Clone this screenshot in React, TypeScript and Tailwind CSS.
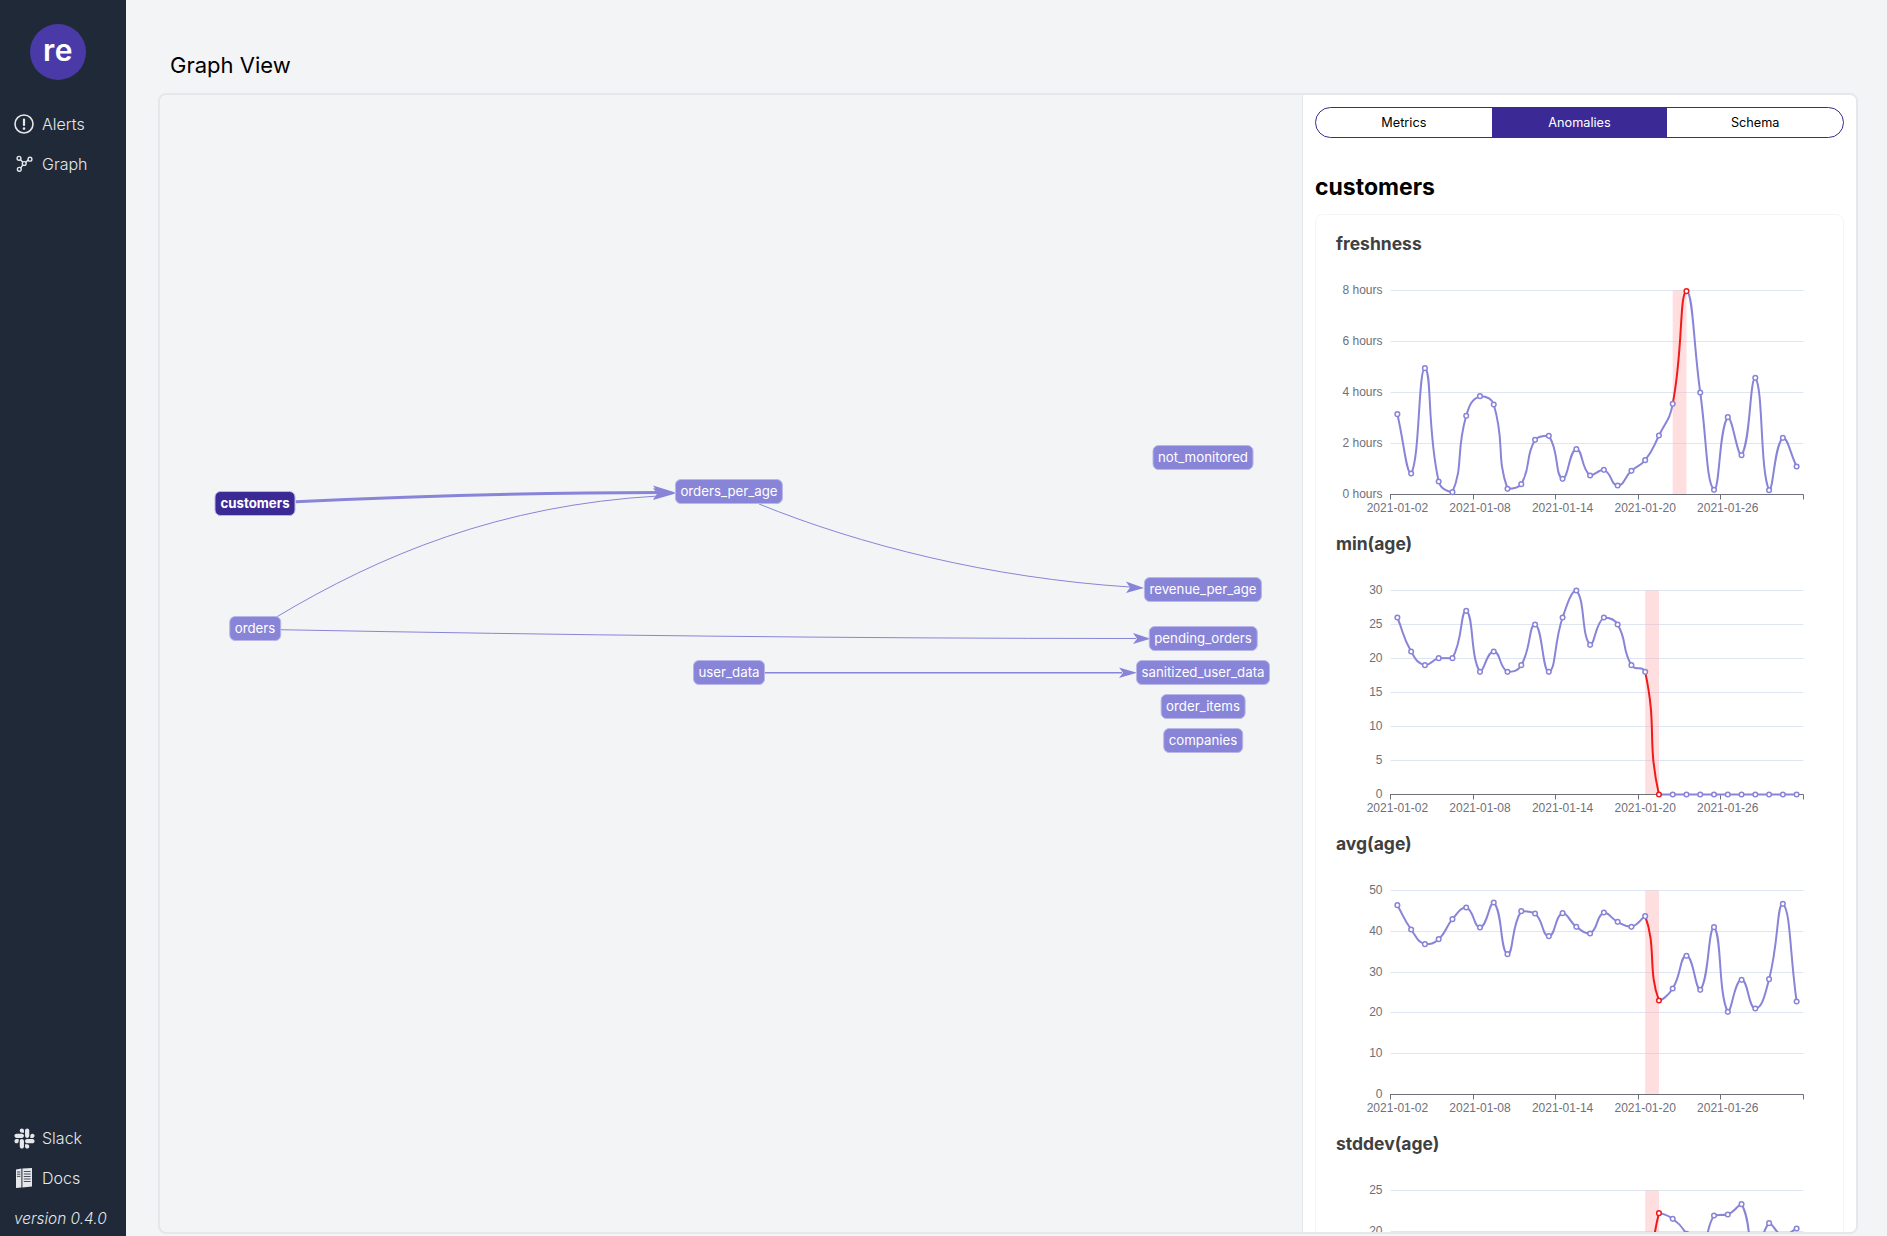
import { FaSlack } from 'react-icons/fa';

const dates = ['2021-01-02', '2021-01-08', '2021-01-14', '2021-01-20', '2021-01-26'];

type Chart = {
  title: string;
  top: number;
  ticks: string[];
  points: number[];
  anomaly: number;
};

// point y values are read off the reference, `top` is where the highest gridline sits
const charts: Chart[] = [
  {
    title: 'freshness',
    top: 615,
    ticks: ['8 hours', '6 hours', '4 hours', '2 hours', '0 hours'],
    anomaly: 20,
    points: [986, 1164, 848, 1188, 1220, 991, 932, 957, 1210, 1196, 1063, 1051, 1180, 1091, 1170, 1153, 1200, 1156, 1124, 1050, 955, 617, 921, 1213, 995, 1109, 877, 1214, 1057, 1143],
  },
  {
    title: 'min(age)',
    top: 210,
    ticks: ['30', '25', '20', '15', '10', '5', '0'],
    anomaly: 18,
    points: [291, 393, 434, 413, 413, 271, 454, 393, 454, 434, 312, 454, 291, 210, 373, 291, 312, 434, 454, 822, 822, 822, 822, 822, 822, 822, 822, 822, 822, 822],
  },
  {
    title: 'avg(age)',
    top: 181,
    ticks: ['50', '40', '30', '20', '10', '0'],
    anomaly: 18,
    points: [225, 298, 342, 327, 267, 232, 292, 217, 372, 243, 250, 318, 249, 290, 310, 247, 275, 290, 258, 511, 475, 377, 479, 291, 545, 449, 535, 447, 221, 514],
  },
  {
    title: 'stddev(age)',
    top: 1080,
    ticks: ['25', '20', '15', '10', '5', '0'],
    anomaly: 18,
    points: [1400, 1380, 1420, 1390, 1410, 1370, 1400, 1430, 1390, 1410, 1380, 1420, 1400, 1370, 1410, 1390, 1420, 1400, 1480, 1148, 1165, 1210, 1280, 1155, 1152, 1121, 1290, 1178, 1215, 1194],
  },
];

const plotLeft = 54.5;
const plotRight = 467.5;
const plotTop = 34.5;
const plotBottom = 238.5;
const band = (plotRight - plotLeft) / 30;

// same smoothing as a smooth echarts line, clamped so the curve stays between its points
function segments(pts: [number, number][], smooth = 0.5) {
  const out: string[] = [];
  const cps: [number, number][] = [];
  pts.forEach((p, i) => {
    const prev = pts[Math.max(i - 1, 0)];
    const next = pts[Math.min(i + 1, pts.length - 1)];
    const dx = next[0] - prev[0];
    const dy = next[1] - prev[1];
    const a = Math.hypot(p[0] - prev[0], p[1] - prev[1]);
    const b = Math.hypot(next[0] - p[0], next[1] - p[1]);
    const r = a + b === 0 ? 0 : b / (a + b);
    const clamp = (v: number, u: number, w: number) => Math.min(Math.max(v, Math.min(u, w)), Math.max(u, w));
    cps.push([clamp(p[0] - dx * smooth * (1 - r), prev[0], p[0]), clamp(p[1] - dy * smooth * (1 - r), prev[1], p[1])]);
    cps.push([clamp(p[0] + dx * smooth * r, p[0], next[0]), clamp(p[1] + dy * smooth * r, p[1], next[1])]);
  });
  for (let i = 0; i < pts.length - 1; i++) {
    const c1 = cps[i * 2 + 1];
    const c2 = cps[(i + 1) * 2];
    out.push(`M${pts[i][0]} ${pts[i][1]}C${c1[0]} ${c1[1]} ${c2[0]} ${c2[1]} ${pts[i + 1][0]} ${pts[i + 1][1]}`);
  }
  return out;
}

function MetricChart({ chart }: { chart: Chart }) {
  const pts = chart.points.map((y, i): [number, number] => [plotLeft + band * (i + 0.5), (y - chart.top) / 3 + plotTop]);
  const segs = segments(pts);
  const step = (plotBottom - plotTop) / (chart.ticks.length - 1);
  const a = chart.anomaly;

  return (
    <div className="h-[300px]">
      <h3 className="h-6 text-[17.5px] leading-6 font-bold text-[#404040]">{chart.title}</h3>
      <svg width="487" height="276" className="block font-['Liberation_Sans',sans-serif] text-[12px]">
        {chart.ticks.map((t, i) => {
          const y = Math.round(plotTop + step * i - 0.5) + 0.5;
          return (
            <g key={t}>
              {i < chart.ticks.length - 1 && <line x1={plotLeft} x2={plotRight} y1={y} y2={y} stroke="#e0e6f1" />}
              <text x="46.5" y={y + 3} textAnchor="end" fill="#6e7079">{t}</text>
            </g>
          );
        })}
        <rect x={pts[a][0]} y={plotTop} width={band} height={plotBottom - plotTop} fill="rgba(255,173,177,0.4)" />
        <line x1={plotLeft - 0.5} x2={plotRight} y1={plotBottom} y2={plotBottom} stroke="#6e7079" />
        {[0, 1, 2, 3, 4, 5].map((i) => {
          const x = Math.round(plotLeft + band * 6 * i - 0.5) + 0.5;
          return <line key={i} x1={x} x2={x} y1={plotBottom} y2={plotBottom + 5} stroke="#6e7079" />;
        })}
        {dates.map((d, i) => (
          <text key={d} x={plotLeft + band * (6 * i + 0.5)} y="256" textAnchor="middle" fill="#6e7079">{d}</text>
        ))}
        {segs.map((d, i) => (
          <path key={i} d={d} fill="none" strokeWidth="2" stroke={i === a ? '#f01a1a' : '#8884d8'} />
        ))}
        {pts.map((p, i) => (
          <circle key={i} cx={p[0]} cy={p[1]} r="2.3" fill="#fff" strokeWidth="1.5" stroke={i === a + 1 ? '#f01a1a' : '#8884d8'} />
        ))}
      </svg>
    </div>
  );
}

const nodes = [
  { name: 'customers', cls: 'left-[95px] top-[396px] w-[81px] bg-[#3b2a96] text-center font-bold' },
  { name: 'orders', cls: 'left-[95px] top-[521px] bg-[#8884d8]' },
  { name: 'orders_per_age', cls: 'left-[569px] top-[384px] bg-[#8884d8]' },
  { name: 'user_data', cls: 'left-[569px] top-[565px] bg-[#8884d8]' },
  { name: 'not_monitored', cls: 'left-[1043px] top-[350px] bg-[#8884d8]' },
  { name: 'revenue_per_age', cls: 'left-[1043px] top-[482px] bg-[#8884d8]' },
  { name: 'pending_orders', cls: 'left-[1043px] top-[531px] bg-[#8884d8]' },
  { name: 'sanitized_user_data', cls: 'left-[1043px] top-[565px] bg-[#8884d8]' },
  { name: 'order_items', cls: 'left-[1043px] top-[599px] bg-[#8884d8]' },
  { name: 'companies', cls: 'left-[1043px] top-[633px] bg-[#8884d8]' },
];

function GraphCanvas() {
  return (
    <div className="relative flex-1 overflow-hidden">
      <svg width="1142" height="1138" className="absolute inset-0" fill="none" stroke="#8884d8">
        <g transform="translate(-160 -95)">
          <path d="M295.7 501.7C420 496 550 492.5 660 492.5" strokeWidth="3" />
          <path d="M276.5 617C380 555 500 505 658 496" />
          <path d="M759 504C860 545 990 578 1130 587" />
          <path d="M279.6 629.7C560 635 850 638.5 1136 638.5" />
          <path d="M765 672.7H1122" strokeWidth="1.5" />
          <g fill="#8884d8" stroke="none">
            <path d="M675.5 492.5L653 485.5L658 492.5L653 499.5Z" />
            <path d="M675.5 493.5L653 488L658 495L653 500Z" />
            <path d="M1144 588L1126 581.5L1130 587.5L1126 593Z" />
            <path d="M1150.5 638.7L1133 633L1137 638.7L1133 644Z" />
            <path d="M1137 672.7L1119 667.5L1123 672.7L1119 678Z" />
          </g>
        </g>
      </svg>
      {nodes.map((n) => (
        <div
          key={n.name}
          className={`absolute h-[25px] -translate-x-1/2 whitespace-nowrap rounded-[6px] border border-[#b9b6e8] px-[4.5px] text-[13.25px] leading-[23px] text-white ${n.cls}`}
        >
          {n.name}
        </div>
      ))}
    </div>
  );
}

function AlertIcon() {
  return (
    <svg width="20" height="20" viewBox="0 0 20 20">
      <circle cx="10" cy="10" r="9" fill="none" stroke="currentColor" strokeWidth="1.6" />
      <rect x="8.9" y="4.5" width="2.2" height="7.5" rx="1" fill="currentColor" />
      <circle cx="10" cy="14.6" r="1.3" fill="currentColor" />
    </svg>
  );
}

function GraphIcon() {
  return (
    <svg width="20" height="20" viewBox="0 0 20 20" fill="none" stroke="currentColor" strokeWidth="1.4">
      <path d="M6.3 5.5L8.8 8.2M14.2 6L11.6 8.6M6.6 14L8.9 10.8" />
      <circle cx="5" cy="4.3" r="1.9" />
      <circle cx="16" cy="5.2" r="1.9" />
      <circle cx="5.3" cy="15.3" r="1.9" />
      <circle cx="10.2" cy="9.5" r="1.9" />
    </svg>
  );
}

function DocsIcon() {
  return (
    <svg width="20" height="20" viewBox="0 0 20 20">
      <path d="M2 1.5L7.4 0.5V19.5L2 20Z" fill="#e5e7eb" />
      <path d="M8.4 0.5L18 0V18.5L8.4 19.5Z" fill="#e5e7eb" />
      <path d="M3 4H6.4M3 6.2H6.4M3 8.4H6.4M9.8 3.5H16.6M9.8 6H16.6M9.8 8.5H16.6M9.8 11H16.6M9.8 13.5H16.6" stroke="#1f2937" strokeWidth="0.8" />
    </svg>
  );
}

function NavItem({ icon, label }: { icon: React.ReactNode; label: string }) {
  return (
    <div className="flex h-10 items-center pl-[14px]">
      <span className="flex w-[28px] text-[#e5e7eb]">{icon}</span>
      <span className="text-[16px] font-light text-[#e5e7eb]">{label}</span>
    </div>
  );
}

export default function App() {
  return (
    <div className="flex h-screen overflow-hidden bg-[#f3f4f6] font-['Inter',sans-serif]">
      <aside className="flex w-[126px] shrink-0 flex-col justify-between bg-[#1f2937]">
        <div className="pt-6">
          <div className="mb-6 ml-[30px] flex h-14 w-14 items-center justify-center rounded-full bg-[#4a3aa7] pb-1 text-[30px] leading-none font-semibold tracking-[0.5px] text-white">
            re
          </div>
          <NavItem icon={<AlertIcon />} label="Alerts" />
          <NavItem icon={<GraphIcon />} label="Graph" />
        </div>
        <div className="pb-[7px]">
          <NavItem icon={<FaSlack size={23} className="-ml-[1.5px] shrink-0" />} label="Slack" />
          <NavItem icon={<DocsIcon />} label="Docs" />
          <div className="pl-[14px] pt-[11px] text-[15.4px] leading-[20px] font-light text-[#e5e7eb] italic">version 0.4.0</div>
        </div>
      </aside>

      <main className="flex min-w-0 flex-1 flex-col pr-[29px] pl-[32px] pb-[2px]">
        <h1 className="h-[93px] pt-[50px] pl-[12px] text-[22px] leading-[30px] text-black">Graph View</h1>
        <div className="flex min-h-0 flex-1 rounded-lg border-2 border-[#e5e7eb]">
          <GraphCanvas />
          <section className="w-[554px] shrink-0 overflow-hidden rounded-r-md border-l border-[#e5e7eb] bg-white px-3 pt-3">
            <div className="flex h-[31px] overflow-hidden rounded-full border border-[#3b2a96] text-[12.7px] leading-[29px]">
              <div className="flex-1 text-center text-black">Metrics</div>
              <div className="flex-1 bg-[#3b2a96] text-center text-white">Anomalies</div>
              <div className="flex-1 text-center text-black">Schema</div>
            </div>
            <h2 className="mt-[33px] h-[32px] text-[23px] leading-[32px] font-bold text-black">customers</h2>
            <div className="mt-[11px] rounded-lg border border-[#f3f4f6] pt-[17px] pl-5">
              {charts.map((c) => (
                <MetricChart key={c.title} chart={c} />
              ))}
            </div>
          </section>
        </div>
      </main>
    </div>
  );
}
